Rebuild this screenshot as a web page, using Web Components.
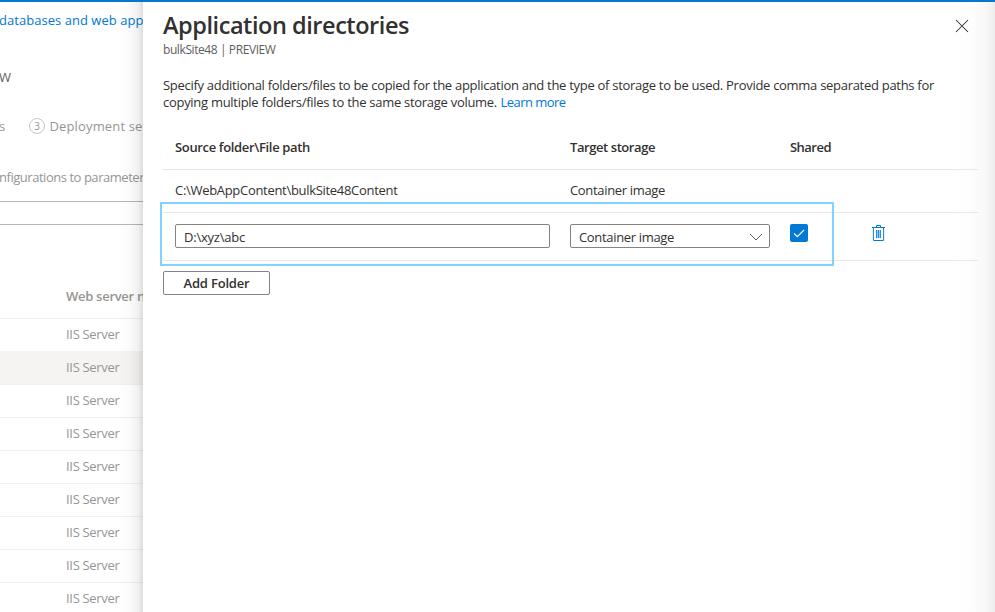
<!DOCTYPE html>
<html lang="en">
<head>
<meta charset="utf-8">
<title>Application directories</title>
<style>
body{margin:0;overflow:hidden;background:#fff;font:13px/18px "Open Sans","Noto Sans",sans-serif;color:#323130}
</style>
</head>
<body>
<portal-shell>
  <wizard-page slot="page"></wizard-page>
  <context-pane slot="pane"></context-pane>
</portal-shell>
<script>
const define = (name, html, setup) => customElements.define(name, class extends HTMLElement {
  connectedCallback() {
    if (this.shadowRoot) return;
    this.attachShadow({mode: 'open'}).innerHTML = html;
    if (setup) setup(this);
  }
});

/* Single line of text tracked to the width given in its "w" attribute. */
define('fit-text', `<style>:host{display:block;width:max-content;white-space:pre;flex:none}span{display:inline-block}</style><span><slot></slot></span>`, el => {
  const w = +el.getAttribute('w');
  if (!w) return;
  const s = el.shadowRoot.querySelector('span');
  const n = el.textContent.length;
  s.style.letterSpacing = ((w - s.getBoundingClientRect().width) / n) + 'px';
});

define('portal-shell', `<style>
:host{display:grid;grid-template-columns:143px 852px;height:612px;box-sizing:border-box;border-top:2px solid #0078d4;overflow:hidden}
.page{overflow:hidden;min-width:0;position:relative}
.page::after{content:"";position:absolute;top:0;right:0;bottom:0;width:24px;background:linear-gradient(90deg,rgba(0,0,0,0),rgba(0,0,0,.018) 45%,rgba(0,0,0,.055) 78%,rgba(0,0,0,.13))}
.pane{background:linear-gradient(90deg,#fff 0,#fff 808px,#fdfdfd 830px,#f8f8f8 843px,#ededed 852px)}
</style><div class="page"><slot name="page"></slot></div><div class="pane"><slot name="pane"></slot></div>`);

define('server-row', `<style>
:host{display:flex;align-items:center;height:33px;box-sizing:border-box;border-top:1px solid #f0f0f0;padding:0 0 2px 66px;color:#979593}
:host([selected]){background:#f5f4f2;border-color:#f5f4f2}
</style><fit-text w="53.5">IIS Server</fit-text>`);

define('wizard-page', `<style>
:host{display:flex;flex-direction:column;width:300px;color:#979593}
.crumb{color:#0078d4;padding-top:9px;margin-left:-1px;height:18px}
.name{padding-top:39px;height:18px;color:#605e5c;margin-left:-1px}
.steps{display:flex;align-items:center;margin-top:31px;height:18px}
.steps fit-text:first-child{width:29px;margin-left:-1px;margin-right:1px}
.num{width:14px;height:14px;border:1px solid #c8c6c4;border-radius:50%;font-size:10px;line-height:14px;text-align:center;margin-right:4.5px}
.note{margin-top:33px;margin-left:-1px;height:18px}
.field{height:22px;margin-top:15px;border:solid #b8b6b4;border-width:1px 0}
.head{margin:62px 0 13px 66px;height:18px;font-weight:600}
</style>
<div class="crumb"><fit-text w="144.5">databases and web app</fit-text></div>
<div class="name"><fit-text w="12">W</fit-text></div>
<div class="steps"><fit-text>s</fit-text><span class="num">3</span><fit-text w="93">Deployment se</fit-text></div>
<div class="note"><fit-text w="145">nfigurations to parameter</fit-text></div>
<div class="field"></div>
<div class="head"><fit-text w="79">Web server n</fit-text></div>
<server-row></server-row><server-row selected></server-row><server-row></server-row><server-row></server-row><server-row></server-row><server-row></server-row><server-row></server-row><server-row></server-row><server-row></server-row>`);

define('check-box', `<style>:host{display:block;width:18px;height:18px;background:#0078d4;border-radius:2px}svg{display:block}</style>
<svg width="18" height="18" fill="none" stroke="#fff" stroke-width="1.15"><path d="M4 9.3 7.3 12.6 14 6"/></svg>`);

define('trash-icon', `<style>:host{display:block}svg{display:block}</style>
<svg width="13" height="17" viewBox="0 0 13 17"><path d="M0 3H13V15.5H0Z" fill="#e3eefa"/><path d="M1.5 3V15.5H11.5V3" fill="#fff" stroke="#2b8ddb"/><path d="M0 2.5H13M4.5 2V.5H8.5V2M2 15.5H11" fill="none" stroke="#0078d4"/><path d="M4 5H9V13H4Z" fill="#9bcaf2"/><path d="M4.5 5V13M6.5 5V13M8.5 5V13" stroke="#2b8ddb"/></svg>`);

define('close-icon', `<style>:host{display:block}svg{display:block}</style>
<svg width="14" height="14" fill="none" stroke="#323130" stroke-width="1.05"><path d="M1 1 13 13M13 1 1 13"/></svg>`);

define('form-box', `<style>:host{display:flex;align-items:center;justify-content:space-between;box-sizing:border-box;height:24px;border:1px solid #85827f;border-radius:2px;padding:2px 6px 0 8px;background:#fff}</style><slot></slot>`);

define('directory-table', `<style>
:host{display:block;position:relative;width:815px}
.row{display:grid;grid-template-columns:395px 220px 81px 1fr;box-sizing:border-box;padding-left:12px;border-bottom:1px solid #e9e8e7}
.head{height:44px;padding-top:12px;font-weight:600}
.data{height:43px;padding-top:11px}
.edit{height:48px;padding-top:11px}
.path{width:375px}.store{width:200px}
trash-icon{margin:1px 0 0 1px}
.mark{position:absolute;left:-3px;top:76px;width:670px;height:60px;border:2px solid #80d4ff}
svg{margin-top:-1px}
</style>
<div class="row head"><fit-text w="135">Source folder\\File path</fit-text><fit-text w="85">Target storage</fit-text><fit-text w="41">Shared</fit-text></div>
<div class="row data"><fit-text w="222.5">C:\\WebAppContent\\bulkSite48Content</fit-text><fit-text w="95">Container image</fit-text></div>
<div class="row edit">
<form-box class="path"><fit-text w="61">D:\\xyz\\abc</fit-text></form-box>
<form-box class="store"><fit-text w="95">Container image</fit-text><svg width="14" height="8" fill="none" stroke="#605e5c"><path d="M1 1 7 7 13 1"/></svg></form-box>
<check-box></check-box><trash-icon></trash-icon></div>
<div class="mark"></div>`);

define('action-button', `<style>:host{display:flex;align-items:center;justify-content:center;box-sizing:border-box;width:107px;height:24px;border:1px solid #85827f;border-radius:2px;font-weight:600;background:#fff}</style><slot></slot>`);

define('context-pane', `<style>
:host{display:block;padding:7px 17px 0 20px}
header{display:flex;justify-content:space-between;padding-right:9px}
.title{font-size:23.5px;line-height:33px;font-weight:600}
.sub{font-size:12px;line-height:16px;color:#605e5c}
close-icon{margin-top:10px}
.desc{margin:19px 0 15px;line-height:17px}
.line{display:flex;gap:3.5px}
.link{color:#0078d4}
directory-table{margin-bottom:10px}
</style>
<header><div><fit-text class="title" w="246">Application directories</fit-text><fit-text class="sub" w="112.5">bulkSite48 | PREVIEW</fit-text></div><close-icon></close-icon></header>
<div class="desc"><fit-text w="771">Specify additional folders/files to be copied for the application and the type of storage to be used. Provide comma separated paths for</fit-text>
<div class="line"><fit-text w="334">copying multiple folders/files to the same storage volume.</fit-text><fit-text class="link" w="65">Learn more</fit-text></div></div>
<directory-table></directory-table>
<action-button><fit-text w="66">Add Folder</fit-text></action-button>`);
</script>
</body>
</html>
